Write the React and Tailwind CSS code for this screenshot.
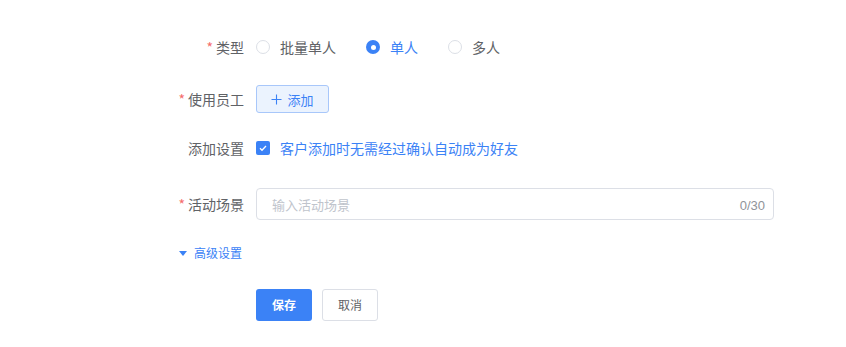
import React from "react";

const font = { fontFamily: '"Noto Sans CJK SC", "Noto Sans", sans-serif' };

function Label({ required, children }) {
  return (
    <div className="w-[256px] shrink-0 pr-3 text-right text-[14px] text-[#606266]">
      {required && <span className="mr-[3px] text-[#f56c6c]">*</span>}
      {children}
    </div>
  );
}

function Radio({ checked, children, className = "" }) {
  return (
    <div className={"flex items-center " + className}>
      {checked ? (
        <span className="flex h-[14px] w-[14px] items-center justify-center rounded-full bg-[#3b82f6]">
          <span className="h-[5px] w-[5px] rounded-full bg-white" />
        </span>
      ) : (
        <span className="h-[14px] w-[14px] rounded-full border border-[#dcdfe6] bg-white" />
      )}
      <span className={"ml-[10px] text-[14px] " + (checked ? "text-[#3b82f6]" : "text-[#606266]")}>{children}</span>
    </div>
  );
}

export default function App() {
  return (
    <div className="h-[347px] w-[846px] bg-white" style={font}>
      <div className="pt-[31px]">
        <div className="flex h-[32px] items-center leading-none">
          <Label required>类型</Label>
          <Radio>批量单人</Radio>
          <Radio checked className="ml-[30px]">单人</Radio>
          <Radio className="ml-[30px]">多人</Radio>
        </div>

        <div className="mt-[20px] flex h-[32px] items-center leading-none">
          <Label required>使用员工</Label>
          <button className="flex h-[28px] w-[73px] items-center justify-center rounded-[3px] border border-[#a8c7fa] bg-[#ebf3fe] text-[13px] text-[#3b82f6]">
            <svg width="11" height="11" viewBox="0 0 11 11" className="mr-[5px]">
              <path d="M5.5 0.5v10M0.5 5.5h10" stroke="#3b82f6" strokeWidth="1.1" />
            </svg>
            添加
          </button>
        </div>

        <div className="mt-[17px] flex h-[32px] items-center leading-none">
          <Label>添加设置</Label>
          <span className="flex h-[14px] w-[14px] items-center justify-center rounded-[2px] bg-[#3b82f6]">
            <svg width="10" height="10" viewBox="0 0 10 10">
              <path d="M2 5.2l2 2L8 3" stroke="white" strokeWidth="1.3" fill="none" />
            </svg>
          </span>
          <span className="ml-[10px] text-[14px] text-[#3b82f6]">客户添加时无需经过确认自动成为好友</span>
        </div>

        <div className="mt-[24px] flex h-[32px] items-center leading-none">
          <Label required>活动场景</Label>
          <div className="flex h-[32px] w-[518px] items-center justify-between rounded-[4px] border border-[#dcdfe6] pl-[15px] pr-[8px]">
            <span className="text-[13px] text-[#c0c4cc]">输入活动场景</span>
            <span className="mt-[3px] text-[13px] text-[#909399]" style={{ fontFamily: '"Liberation Sans", sans-serif' }}>0/30</span>
          </div>
        </div>

        <div className="mt-[17px] flex h-[32px] items-center pl-[179px] leading-none">
          <svg width="8" height="5" viewBox="0 0 8 5">
            <path d="M0 0h8L4 5z" fill="#3b82f6" />
          </svg>
          <span className="ml-[7px] text-[12px] text-[#3b82f6]">高级设置</span>
        </div>

        <div className="mt-[20px] flex h-[32px] items-center pl-[256px] leading-none">
          <button className="h-[32px] w-[56px] rounded-[3px] bg-[#3b82f6] text-[12px] font-bold text-white">保存</button>
          <button className="ml-[10px] h-[32px] w-[56px] rounded-[3px] border border-[#dcdfe6] bg-white text-[12px] text-[#606266]">取消</button>
        </div>
      </div>
    </div>
  );
}
